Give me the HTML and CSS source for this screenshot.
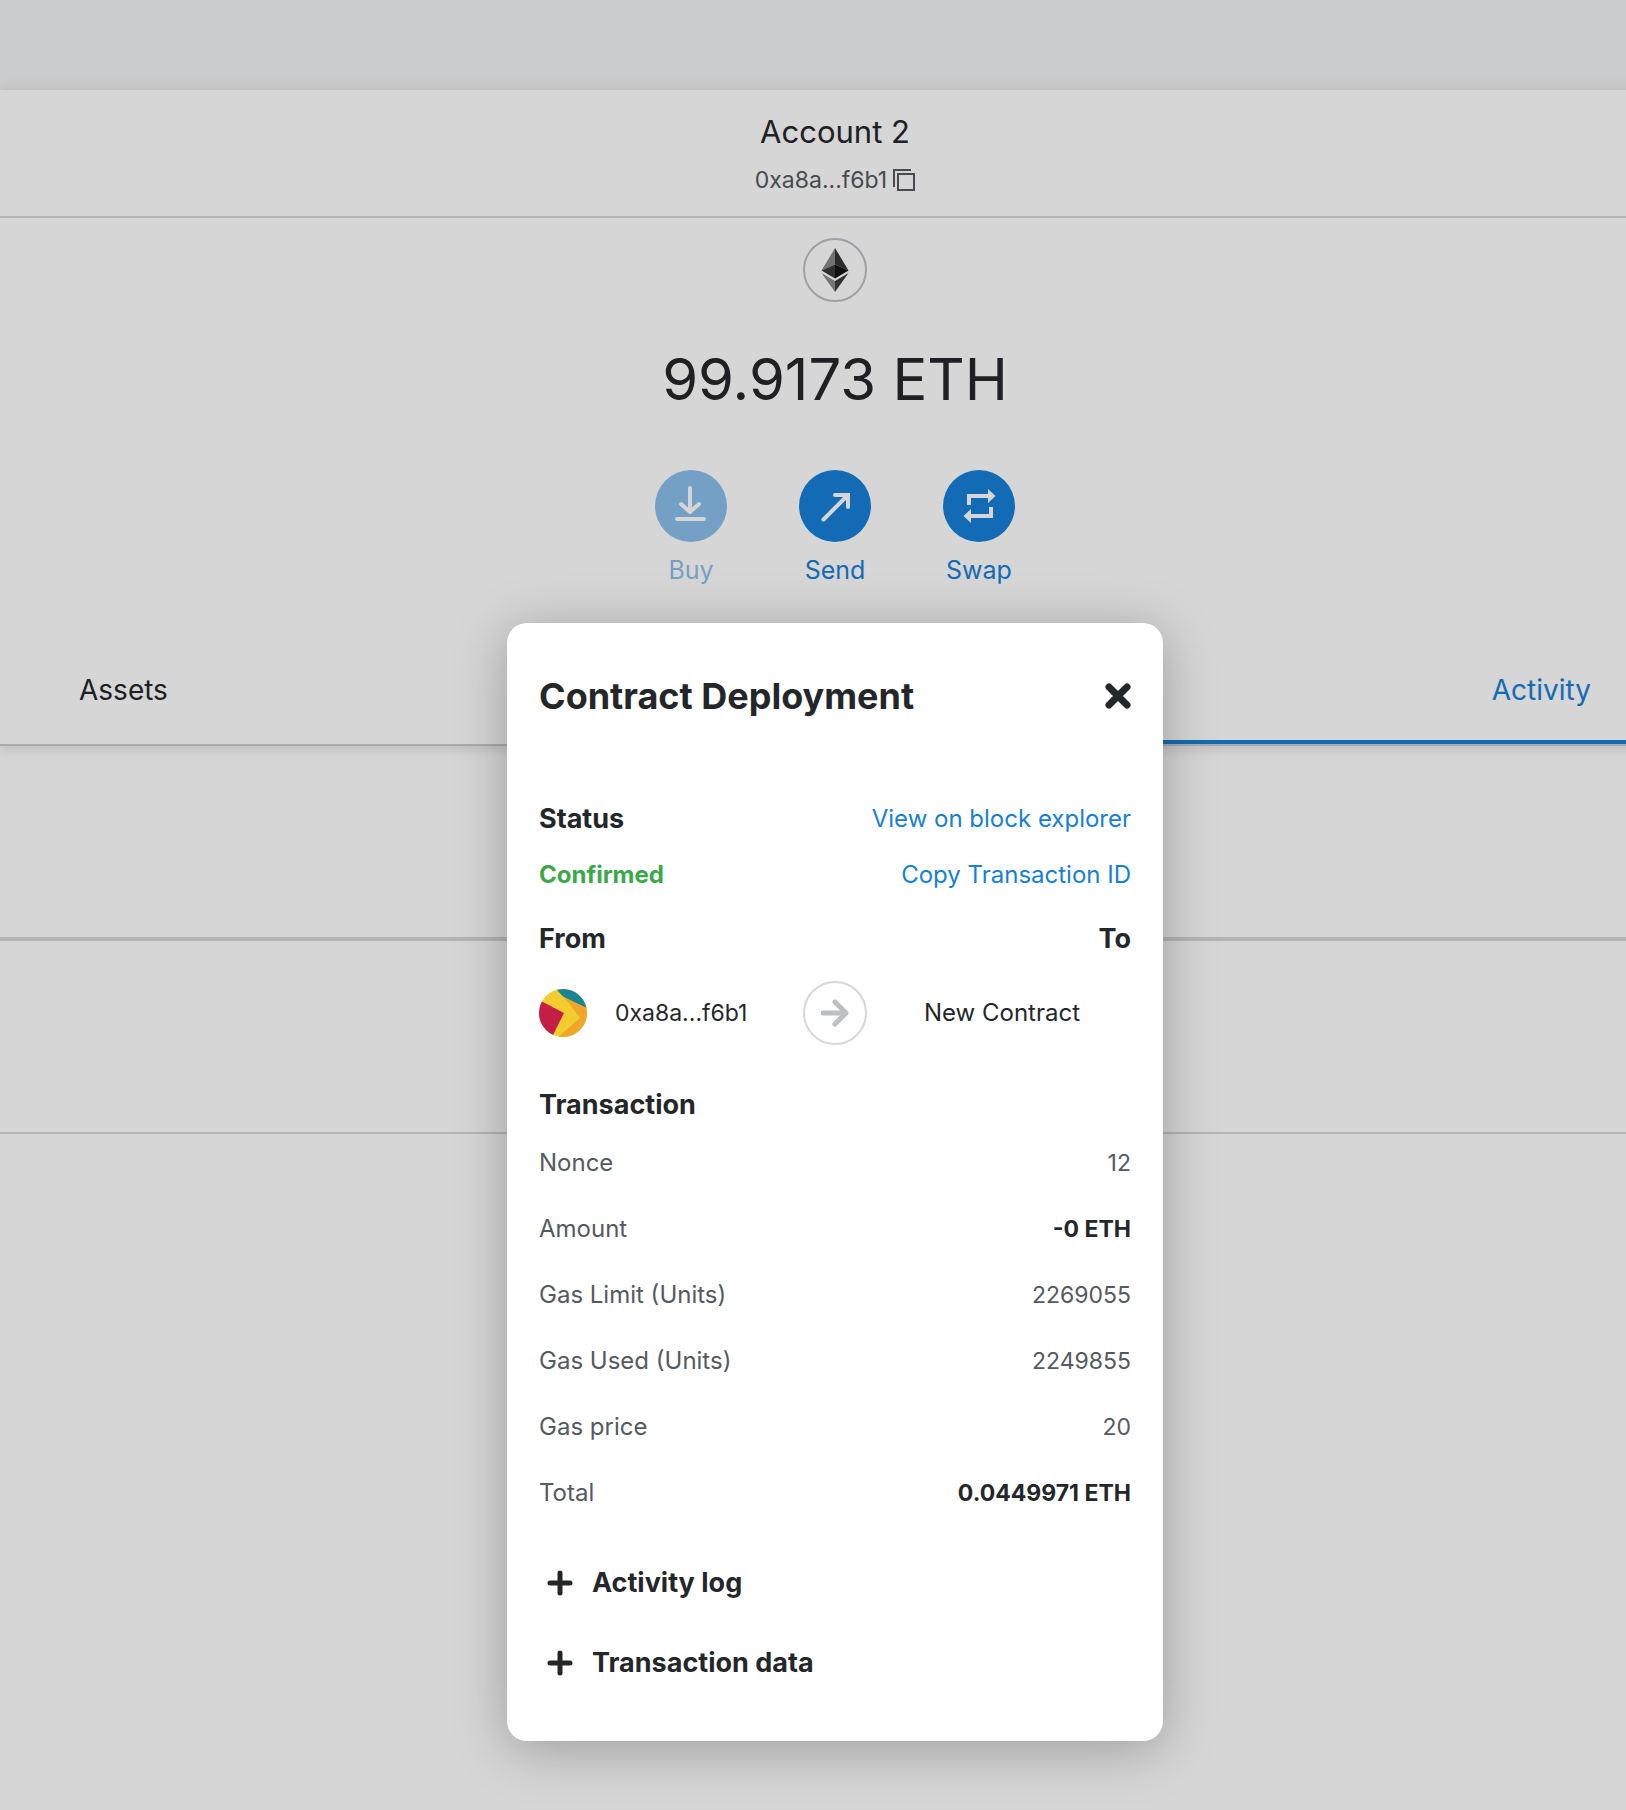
FILE: index.html
```html
<!DOCTYPE html>
<html lang="en">
<head>
<meta charset="utf-8">
<title>Account 2 – Contract Deployment</title>
<link rel="stylesheet" href="styles.css">
</head>
<body>
<div class="page">
  <main class="wallet">
    <header class="account">
      <h1 class="account-name">Account 2</h1>
      <button class="account-address" type="button">0xa8a...f6b1
        <svg class="copy-icon" viewBox="0 0 22 22" aria-hidden="true"><path d="M18 1H1v17M5 5h16v16H5z" fill="none" stroke="currentColor" stroke-width="2"/></svg>
      </button>
    </header>
    <section class="overview">
      <div class="token">
        <svg class="token-icon" viewBox="0 0 28 44" aria-hidden="true">
          <path d="M14 0L0.500 22.500 14 16.500z" fill="#8a8a8a"/><path d="M14 0l13.500 22.500L14 16.500z" fill="#343434"/>
          <path d="M.5 22.500L14 16.500v14z" fill="#393939"/><path d="M27.500 22.500L14 16.500v14z" fill="#141414"/>
          <path d="M.5 25L14 33v11z" fill="#8c8c8c"/><path d="M27.500 25L14 33v11z" fill="#3c3c3b"/>
        </svg>
      </div>
      <p class="balance">99.9173 ETH</p>
      <div class="actions">
        <button class="action" type="button" disabled>
          <span class="action-disc"><svg viewBox="0 0 72 72" aria-hidden="true"><path d="M35 18v24M26 34l9 8 9-8M22 49h27" fill="none" stroke="#fff" stroke-width="4" stroke-linecap="round" stroke-linejoin="round"/></svg></span>
          Buy
        </button>
        <button class="action" type="button">
          <span class="action-disc"><svg viewBox="0 0 72 72" aria-hidden="true"><path d="M24.500 49.500L49 25M36 25h13v12" fill="none" stroke="#fff" stroke-width="4" stroke-linecap="round"/></svg></span>
          Send
        </button>
        <button class="action" type="button">
          <span class="action-disc"><svg viewBox="0 0 72 72" aria-hidden="true"><path d="M26 35v-9h21M48 37v9H27" fill="none" stroke="#fff" stroke-width="4"/><path d="M45 19l7.500 7L45 33zM28 39l-7.500 7 7.500 7z" fill="#fff"/></svg></span>
          Swap
        </button>
      </div>
    </section>
    <nav class="tabs">
      <button class="tab" type="button">Assets</button>
      <button class="tab tab-active" type="button">Activity</button>
    </nav>
    <div class="activity-row"></div>
    <div class="activity-row activity-row-last"></div>
  </main>

  <div class="overlay">
    <section class="modal" role="dialog" aria-labelledby="modal-title">
      <div class="line modal-head">
        <h2 id="modal-title">Contract Deployment</h2>
        <button class="close" type="button" aria-label="Close"><svg viewBox="0 0 26 26" aria-hidden="true"><path d="M4 4l18 18M22 4L4 22" stroke="currentColor" stroke-width="7" stroke-linecap="round"/></svg></button>
      </div>
      <div class="line status"><h3>Status</h3><a href="#explorer">View on block explorer</a></div>
      <div class="line result"><strong>Confirmed</strong><button class="copy-id" type="button">Copy Transaction ID</button></div>
      <div class="line parties-head"><h3>From</h3><h3>To</h3></div>
      <div class="parties">
        <div class="sender">
          <svg class="avatar" viewBox="0 0 48 48" aria-hidden="true">
            <clipPath id="disc"><circle cx="24" cy="24" r="24"/></clipPath>
            <g clip-path="url(#disc)"><path d="M0 0h48v48H0z" fill="#f3cd2f"/><path d="M24 7l24 11v30H19l22-19z" fill="#f0a628"/><path d="M17 0h31v19L24 7.500z" fill="#1a8490"/><path d="M0 11l25 13-12 24H0z" fill="#c41d48"/></g>
          </svg>
          <span>0xa8a...f6b1</span>
        </div>
        <div class="arrow"><svg viewBox="0 0 28 28" aria-hidden="true"><path d="M2 14h22M14 3l11 11-11 11" fill="none" stroke="#bbc0c5" stroke-width="5" stroke-linecap="round" stroke-linejoin="round"/></svg></div>
        <div class="recipient">New Contract</div>
      </div>
      <h3 class="details-title">Transaction</h3>
      <dl class="details">
        <div class="line"><dt>Nonce</dt><dd>12</dd></div>
        <div class="line"><dt>Amount</dt><dd class="total">-0 ETH</dd></div>
        <div class="line"><dt>Gas Limit (Units)</dt><dd>2269055</dd></div>
        <div class="line"><dt>Gas Used (Units)</dt><dd>2249855</dd></div>
        <div class="line"><dt>Gas price</dt><dd>20</dd></div>
        <div class="line"><dt>Total</dt><dd class="total">0.0449971 ETH</dd></div>
      </dl>
      <div class="expanders">
        <button class="expander" type="button" aria-expanded="false"><svg viewBox="0 0 26 26" aria-hidden="true"><path d="M13 3v20M3 13h20" stroke="currentColor" stroke-width="5" stroke-linecap="round"/></svg>Activity log</button>
        <button class="expander" type="button" aria-expanded="false"><svg viewBox="0 0 26 26" aria-hidden="true"><path d="M13 3v20M3 13h20" stroke="currentColor" stroke-width="5" stroke-linecap="round"/></svg>Transaction data</button>
      </div>
    </section>
  </div>
</div>
</body>
</html>
```
FILE: styles.css
```css
* { box-sizing: border-box; }
html { overflow-x: hidden; }
body { margin: 0; font-family: Inter, "Liberation Sans", sans-serif; font-size: 24px; line-height: 32px; color: #24272a; background: #f2f3f5; }
h1, h2, h3, p, dl, dd { margin: 0; }
button { padding: 0; border: 0; background: none; font: inherit; color: inherit; cursor: pointer; }
svg { display: block; }

/* The wallet is 44px wider than the window and runs off its right edge. */
.page { position: relative; margin-right: -44px; min-height: 100vh; padding-top: 90px; display: flex; flex-direction: column; }
.wallet { flex: 1; background: #fff; box-shadow: 0 0 14px rgba(0, 0, 0, .1); }

.account { display: flex; flex-direction: column; align-items: center; gap: 12px; padding: 22px 0 20px; border-bottom: 2px solid #d6d6dc; }
.account-name { font-size: 31px; line-height: 40px; font-weight: 400; }
.account-address { display: flex; align-items: center; gap: 6px; font-size: 23px; color: #535a61; }
.copy-icon { width: 22px; height: 22px; }

.overview { display: flex; flex-direction: column; align-items: center; padding: 20px 0 62px; }
.token { display: grid; place-items: center; width: 64px; height: 64px; border: 2px solid #bbc0c5; border-radius: 50%; }
.token-icon { width: 28px; height: 44px; }
.balance { margin-top: 41px; font-size: 58px; line-height: 72px; }
.actions { display: flex; margin-top: 55px; }
.action { display: flex; flex-direction: column; align-items: center; gap: 12px; width: 144px; font-size: 25px; color: #1680d7; }
.action:disabled { opacity: .5; cursor: default; }
.action-disc { width: 72px; height: 72px; border-radius: 50%; background: #1680d7; }

.tabs { display: flex; border-bottom: 2px solid #cacbd0; box-shadow: 0 6px 8px rgba(0, 0, 0, .08); }
.tab { flex: 1; padding: 26px 79px 34px; border-bottom: 4px solid transparent; font-size: 28px; text-align: left; }
.tab-active { border-color: #1680d7; color: #1680d7; text-align: right; }
.activity-row { height: 195px; border-bottom: 4px solid #d6d6dc; }
.activity-row-last { height: 193px; border-bottom-width: 2px; }

.overlay { position: absolute; inset: 0; display: flex; justify-content: center; align-items: flex-start; padding-top: 623px; background: rgba(0, 0, 0, .16); }
.modal { width: 656px; padding: 47px 32px 58px; border-radius: 20px; background: #fff; box-shadow: 0 8px 54px rgba(0, 0, 0, .27); }
.line { display: flex; justify-content: space-between; align-items: center; }
.modal-head h2 { font-size: 36px; line-height: 52px; font-weight: 700; }
.close svg { width: 26px; height: 26px; }
h3 { font-size: 27px; line-height: 32px; font-weight: 700; }
.modal a { color: #1680d7; text-decoration: none; }
.status { margin-top: 81px; }
.result { margin-top: 24px; }
.result strong { color: #3ba84a; }
.copy-id { color: #1680d7; }
.parties-head { margin-top: 32px; }
.parties { display: grid; grid-template-columns: 1fr 64px 1fr; align-items: center; margin-top: 26px; }
.sender { display: flex; align-items: center; gap: 28px; font-size: 23px; }
.avatar { width: 48px; height: 48px; }
.arrow { display: grid; place-items: center; height: 64px; border: 2px solid #d6d6dc; border-radius: 50%; }
.arrow svg { width: 28px; height: 28px; }
.recipient { padding-left: 6px; text-align: center; }
.details-title { margin-top: 44px; }
.details { display: flex; flex-direction: column; gap: 34px; margin-top: 26px; color: #535a61; }
.details dd { font-size: 23px; }
.details .total { color: #24272a; font-weight: 700; }
.expanders { display: flex; flex-direction: column; gap: 40px; margin-top: 54px; }
.expander { display: flex; align-items: center; gap: 19px; padding-left: 8px; font-size: 27px; line-height: 40px; font-weight: 700; }
.expander svg { width: 26px; height: 26px; }
```
